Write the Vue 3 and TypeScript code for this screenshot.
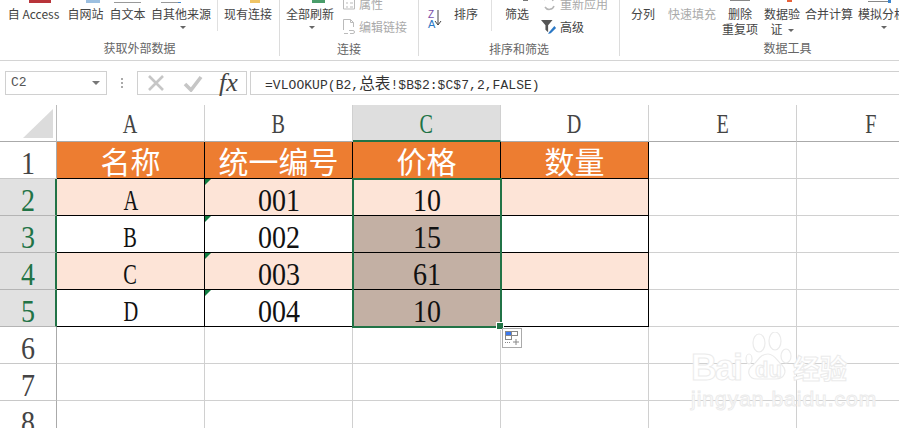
<script setup lang="ts">
const cols = ['A', 'B', 'C', 'D', 'E', 'F']
type Row = { n: number; cells: string[]; kind: string }
const rows: Row[] = [
  { n: 2, cells: ['A', '001', '10', ''], kind: 'tint' },
  { n: 3, cells: ['B', '002', '15', ''], kind: 'plain' },
  { n: 4, cells: ['C', '003', '61', ''], kind: 'tint' },
  { n: 5, cells: ['D', '004', '10', ''], kind: 'plain' },
]
const heads = ['名称', '统一编号', '价格', '数量']
const blanks = [6, 7, 8]
const glyphClass = (v: string) => (/\d/.test(v) ? 'num' : 'let big')
</script>

<template>
  <div class="app">
    <div class="ribbon">
      <section class="group g1">
        <div class="items">
          <span class="tool w67"><i class="ic red"></i>自 Access</span>
          <span class="tool w37"><i class="ic blue"></i>自网站</span>
          <span class="tool w47"><i class="ic text-ic"></i>自文本</span>
          <span class="tool w59"><i class="ic other"></i>自其他来源<b class="caret"></b></span>
          <span class="sep s1"></span>
          <span class="tool w60"><i class="ic yellow"></i>现有连接</span>
        </div>
        <div class="label">获取外部数据</div>
      </section>
      <section class="group g2">
        <div class="items">
          <span class="tool w60"><i class="ic green"></i>全部刷新<b class="caret"></b></span>
          <div class="stack st2 muted">
            <span class="mini"><svg width="14" height="14" viewBox="0 0 14 14"><path d="M1.500-2h11v14h-11zM4 2h2M4 6h2M4 10h2M8 2h3M8 6h3M8 10h3" fill="none" stroke="#bbb"/></svg>属性</span>
            <span class="mini"><svg width="14" height="16" viewBox="0 0 14 16"><path d="M1.500 11V.5h7l3 3V8M8.500.5v3h3M2 14.500h4M7 11.500h4a1.500 1.500 0 0 1 0 3H8" fill="none" stroke="#bbb"/></svg>编辑链接</span>
          </div>
        </div>
        <div class="label">连接</div>
      </section>
      <section class="group g3">
        <div class="items">
          <span class="az"><em class="z">Z</em><em class="a">A</em><svg width="8" height="16" viewBox="0 0 8 16"><path d="M4 0v15M1 11l3 4 3-4" fill="none" stroke="#444"/></svg></span>
          <span class="tool w30">排序</span>
          <span class="sep s2"></span>
          <span class="tool w50"><i class="ic tick"></i>筛选</span>
          <div class="stack st3">
            <span class="mini muted"><svg width="16" height="14" viewBox="0 0 16 14"><path d="M3 3a5 5 0 0 1 9 1M13 9a5 5 0 0 1-9 1" fill="none" stroke="#b5b5b5" stroke-width="1.500"/></svg>重新应用</span>
            <span class="mini"><svg width="16" height="16" viewBox="0 0 18 16"><path d="M0 0h13L8 6v8L5 11V6z" fill="#555"/><path d="M9 14l6-7 2 2-6 6-3 1z" fill="#2b78c5"/></svg>高级</span>
          </div>
        </div>
        <div class="label">排序和筛选</div>
      </section>
      <section class="group g4">
        <div class="items">
          <span class="tool w46">分列</span>
          <span class="tool w52 dim">快速填充</span>
          <span class="tool w44"><i class="ic del"></i>删除<br />重复项</span>
          <span class="tool w40"><i class="ic orange"></i>数据验<br />证<b class="caret inl"></b></span>
          <span class="tool w54">合并计算</span>
          <span class="tool w52"><i class="ic whatif"></i><i class="ic blue2"></i>模拟分析<b class="caret"></b></span>
        </div>
        <div class="label">数据工具</div>
      </section>
    </div>

    <div class="formula-row">
      <div class="namebox"><span>C2</span><b class="caret dark"></b></div>
      <div class="dots"><i></i><i></i><i></i></div>
      <div class="fx-btns">
        <svg width="18" height="18" viewBox="0 0 18 18"><path d="M2 2l14 14M16 2L2 16" stroke="#c6c6c6" stroke-width="2.600" fill="none"/></svg>
        <svg class="check" width="20" height="18" viewBox="0 0 20 18"><path d="M2 10l6 6L18 3" stroke="#c6c6c6" stroke-width="3.600" fill="none"/></svg>
        <span class="fx">fx</span>
      </div>
      <div class="formula">=VLOOKUP(B2,<span class="cjk">总表</span>!$B$2:$C$7,2,FALSE)</div>
    </div>

    <div class="sheet">
      <div class="corner"><svg width="30" height="29" viewBox="0 0 30 29"><path d="M30 0v29H0z" fill="#dcdcdc"/></svg></div>
      <div v-for="(c, i) in cols" :key="c" class="colhead" :class="{ on: i === 2 }"><span class="let">{{ c }}</span></div>

      <div class="rowhead"><span class="num">1</span></div>
      <div v-for="h in heads" :key="h" class="cell head">{{ h }}</div>
      <div class="cell"></div><div class="cell"></div>

      <template v-for="r in rows" :key="r.n">
        <div class="rowhead on"><span class="num">{{ r.n }}</span></div>
        <div
          v-for="(v, i) in r.cells"
          :key="i"
          class="cell data"
          :class="[r.kind, { tri: i === 1, brown: i === 2 && r.n > 2 }]"
        ><span :class="glyphClass(v)">{{ v }}</span></div>
        <div class="cell"></div><div class="cell"></div>
      </template>

      <template v-for="n in blanks" :key="n">
        <div class="rowhead"><span class="num">{{ n }}</span></div>
        <div v-for="c in cols" :key="c" class="cell"></div>
      </template>

      <div class="selection"><i class="handle"></i></div>
      <div class="paste">
        <svg width="18" height="18" viewBox="0 0 18 18">
          <rect x="2.500" y="2.500" width="6" height="4" fill="#3b78f0" stroke="#888"/>
          <rect x="8.500" y="2.500" width="6" height="4" fill="#fff" stroke="#888"/>
          <rect x="2.500" y="6.500" width="6" height="4" fill="#fff" stroke="#888"/>
          <path d="M2 13.500h6" stroke="#888" stroke-dasharray="1 1"/>
          <path d="M13 10v6M10 13h6" stroke="#888"/>
        </svg>
      </div>
      <div class="mark">
        <div class="brand">
          <span class="bai">Bai</span>
          <svg width="48" height="52" viewBox="0 0 48 52">
            <g fill="#fff" stroke="#ebebeb" stroke-width="1.200">
              <ellipse cx="5" cy="27" rx="3" ry="5"/>
              <ellipse cx="15" cy="11" rx="6" ry="9"/>
              <ellipse cx="31" cy="9" rx="6" ry="9"/>
              <ellipse cx="42" cy="24" rx="5" ry="7"/>
              <path d="M24 22c7 0 9 7 14 11 6 6 2 14-6 14H13C4 47 2 38 9 33c5-4 7-11 15-11z"/>
            </g>
          </svg>
          <span class="du">du</span>
          <span class="cn">经验</span>
        </div>
        <div class="url">jingyan.baidu.com</div>
      </div>
    </div>
  </div>
</template>

<style scoped>
.app {
  width: 899px;
  height: 428px;
  overflow: hidden;
  background: #fff;
  font-family: "Noto Sans CJK SC", "Noto Sans", sans-serif;
  color: #444;
}
.ribbon {
  display: flex;
  height: 61px;
  border-bottom: 1px solid #d4d4d4;
  box-sizing: border-box;
  font-size: 12px;
  overflow: hidden;
}
.group {
  display: flex;
  flex: none;
  flex-direction: column;
  box-sizing: border-box;
  border-right: 1px solid #dcdcdc;
  height: 56px;
}
.g1 { width: 280px; }
.g2 { width: 139px; }
.g3 { width: 201px; }
.g4 { width: 279px; border-right: 0; }
.g4 .label { padding-left: 56px; }
.items {
  display: flex;
  height: 41px;
  align-items: flex-start;
}
.label {
  text-align: center;
  color: #666;
  line-height: 16px;
  margin-top: 3px;
}
.tool {
  position: relative;
  flex: none;
  text-align: center;
  line-height: 15px;
  padding-top: 6px;
  white-space: nowrap;
}
.w30 { width: 30px; }
.w37 { width: 37px; }
.w40 { width: 40px; }
.w44 { width: 44px; }
.w46 { width: 46px; }
.w47 { width: 47px; }
.w50 { width: 50px; }
.w52 { width: 52px; }
.w54 { width: 54px; }
.w59 { width: 59px; }
.w60 { width: 60px; }
.w67 { width: 67px; }
.dim { color: #aaa; }
.ic {
  position: absolute;
  top: 0;
  left: 50%;
  height: 3px;
}
.red { background: #b8343a; width: 22px; margin-left: -5px; }
.blue { background: #9cbfe0; width: 14px; margin-left: 0; }
.text-ic { background: #999; width: 27px; margin-left: -14px; top: 2px; height: 1px; }
.other { background: linear-gradient(90deg, #999 85%, #3a86d0 85%); width: 20px; margin-left: -20px; top: 2px; height: 1px; }
.yellow { background: #efc465; width: 10px; margin-left: 2px; }
.green { background: #4a9d6a; width: 13px; margin-left: 2px; }
.tick { background: #777; width: 5px; height: 1px; margin-left: 6px; }
.del { background: #888; width: 20px; height: 1px; margin-left: -10px; }
.orange { background: #e8623a; width: 5px; height: 2px; margin-left: 5px; }
.whatif { background: #888; width: 20px; height: 1px; margin-left: -14px; top: 1px; }
.blue2 { background: #3a86d0; width: 3px; margin-left: 6px; }
.caret {
  position: absolute;
  left: 50%;
  top: 26px;
  margin-left: -1px;
  width: 0;
  height: 0;
  border: 3px solid transparent;
  border-top: 3px solid #666;
  border-bottom: 0;
}
.caret.inl { position: static; display: inline-block; margin: 0 0 2px 5px; }
.caret.dark { position: absolute; left: auto; right: 6px; top: 9px; margin: 0; border-width: 4px 4px 0; border-top-color: #777; }
.sep {
  flex: none;
  width: 1px;
  height: 31px;
  background: #e0e0e0;
}
.s1 { margin-left: 7px; }
.s2 { margin-left: 10px; }
.stack {
  display: flex;
  flex: none;
  flex-direction: column;
  margin-top: -8px;
}
.st2 { margin-left: 2px; }
.st3 { margin-left: -1px; }
.mini {
  display: flex;
  align-items: center;
  height: 23px;
  line-height: 15px;
  white-space: nowrap;
}
.mini svg { flex: none; margin-right: 3px; }
.muted { color: #aaa; }
.az {
  display: flex;
  flex: none;
  position: relative;
  width: 24px;
  height: 28px;
  margin-left: 8px;
}
.az em { position: absolute; font: 10px/10px "Liberation Sans", sans-serif; left: 1px; }
.az .z { top: 10px; color: #7a4fa8; }
.az .a { top: 19px; color: #2b78c5; font-size: 11px; }
.az svg { position: absolute; left: 7px; top: 10px; }

.formula-row {
  display: flex;
  align-items: center;
  height: 24px;
  margin-top: 10px;
  padding-left: 5px;
  box-sizing: border-box;
}
.namebox {
  position: relative;
  width: 102px;
  height: 24px;
  box-sizing: border-box;
  border: 1px solid #d0d0d0;
  font: 13px/22px "Liberation Mono", monospace;
  padding-left: 5px;
  color: #555;
}
.dots {
  display: flex;
  flex-direction: column;
  gap: 2px;
  width: 30px;
  align-items: center;
}
.dots i { width: 2px; height: 2px; background: #aaa; }
.fx-btns {
  display: flex;
  align-items: center;
  width: 110px;
  height: 24px;
  box-sizing: border-box;
  border: 1px solid #d0d0d0;
  padding-left: 9px;
}
.check { margin-left: 18px; }
.fx {
  font: italic 400 26px/22px "Liberation Serif", serif;
  color: #444;
  margin-left: 16px;
}
.formula {
  flex: 1;
  height: 24px;
  margin-left: 3px;
  box-sizing: border-box;
  border: 1px solid #d0d0d0;
  border-right: 0;
  padding-left: 14px;
  font: 13px/21px "Liberation Mono", monospace;
  letter-spacing: 0.05px;
  color: #333;
  white-space: nowrap;
}
.cjk { font: 15.600px/20px "Noto Sans CJK SC", sans-serif; }

.sheet {
  position: relative;
  display: grid;
  grid-template-columns: 57px repeat(6, 148px);
  grid-template-rows: repeat(8, 37px);
  margin-top: 10px;
  font-family: "Liberation Serif", "Noto Sans CJK SC", serif;
}
.let, .num {
  display: inline-block;
  transform-origin: center;
}
.let { font-size: 28px; transform: scaleX(0.72); }
.let.big { font-size: 30px; transform: scaleX(0.68); }
.num { font-size: 32px; transform: scaleX(0.875); }
.corner {
  display: flex;
  justify-content: flex-end;
  align-items: flex-end;
  padding: 0 3px 3px 0;
  box-sizing: border-box;
  border-right: 1px solid #bbb;
  border-bottom: 1px solid #aaa;
}
.colhead {
  box-sizing: border-box;
  border-right: 1px solid #d0d0d0;
  border-bottom: 1px solid #aaa;
  text-align: center;
  line-height: 38px;
  color: #444;
}
.colhead.on {
  background: #dedede;
  color: #217346;
  border-bottom: 2px solid #217346;
}
.rowhead {
  box-sizing: border-box;
  border-right: 1px solid #aaa;
  border-bottom: 1px solid #c8c8c8;
  text-align: center;
  line-height: 42px;
  color: #444;
}
.rowhead.on {
  background: #e1e1e1;
  color: #217346;
  border-right: 2px solid #217346;
  border-bottom-color: #b4b4b4;
}
.cell {
  position: relative;
  box-sizing: border-box;
  border-right: 1px solid #d0d0d0;
  border-bottom: 1px solid #d0d0d0;
  text-align: center;
  line-height: 42px;
  color: #111;
}
.cell.head {
  background: #ed7d31;
  color: #fff;
  border-right-color: #000;
  border-bottom-color: #000;
  font-family: "Noto Sans CJK SC", sans-serif;
  font-size: 30px;
  line-height: 37px;
}
.cell.data { border-right-color: #000; border-bottom-color: #000; }
.cell.tint { background: #fde4d7; }
.cell.brown { background: #c3b0a4; }
.cell.tri::before {
  content: "";
  position: absolute;
  left: 0;
  top: 0;
  border-top: 6px solid #107c41;
  border-right: 6px solid transparent;
}
.selection {
  position: absolute;
  left: 352px;
  top: 73px;
  width: 150px;
  height: 150px;
  box-sizing: border-box;
  border: 2px solid #217346;
  pointer-events: none;
}
.handle {
  position: absolute;
  right: -4px;
  bottom: -4px;
  width: 6px;
  height: 6px;
  background: #217346;
  border: 1px solid #fff;
}
.paste {
  position: absolute;
  left: 502px;
  top: 223px;
  width: 20px;
  height: 20px;
  box-sizing: border-box;
  border: 1px solid #aaa;
  background: #fff;
}
.mark {
  position: absolute;
  left: 691px;
  top: 227px;
  width: 190px;
  pointer-events: none;
}
.brand {
  position: relative;
  display: flex;
  height: 54px;
  font: bold 36px/72px "Liberation Sans", sans-serif;
  color: #fff;
  -webkit-text-stroke: 1px #ebebeb;
}
.bai { width: 53px; letter-spacing: -2px; }
.brand svg { flex: none; }
.du {
  position: absolute;
  left: 64px;
  top: 16px;
  font-size: 22px;
  line-height: 44px;
}
.cn {
  font: 700 27px/72px "Noto Sans CJK SC", sans-serif;
  margin-left: 1px;
}
.url {
  font: 21px/20px "Liberation Sans", sans-serif;
  color: #fff;
  -webkit-text-stroke: 1px #ebebeb;
  letter-spacing: 1px;
  margin-top: 3px;
  white-space: nowrap;
}
</style>
